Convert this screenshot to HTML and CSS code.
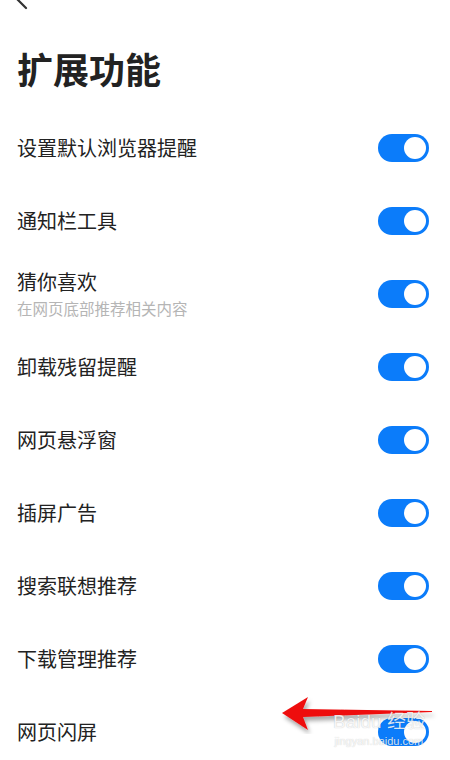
FILE: index.html
```html
<!DOCTYPE html>
<html lang="zh">
<head>
<meta charset="UTF-8">
<meta name="viewport" content="width=device-width, initial-scale=1.0">
<title>扩展功能</title>
<link rel="stylesheet" href="styles.css">
</head>
<body>
<div class="page">
  <div class="topbar">
    <svg class="back" width="24" height="24" viewBox="0 0 24 24">
      <path d="M22 8 H4 M11 1 L4 8 L13 17" fill="none" stroke="#333" stroke-width="2.2" stroke-linecap="round" stroke-linejoin="round"/>
    </svg>
  </div>
  <h1 class="title">扩展功能</h1>

  <div class="row">
    <div class="label">设置默认浏览器提醒</div>
    <span class="toggle"></span>
  </div>
  <div class="row">
    <div class="label">通知栏工具</div>
    <span class="toggle"></span>
  </div>
  <div class="row">
    <div class="label">猜你喜欢
      <div class="sub">在网页底部推荐相关内容</div>
    </div>
    <span class="toggle"></span>
  </div>
  <div class="row">
    <div class="label">卸载残留提醒</div>
    <span class="toggle"></span>
  </div>
  <div class="row">
    <div class="label">网页悬浮窗</div>
    <span class="toggle"></span>
  </div>
  <div class="row">
    <div class="label">插屏广告</div>
    <span class="toggle"></span>
  </div>
  <div class="row">
    <div class="label">搜索联想推荐</div>
    <span class="toggle"></span>
  </div>
  <div class="row">
    <div class="label">下载管理推荐</div>
    <span class="toggle"></span>
  </div>
  <div class="row">
    <div class="label">网页闪屏</div>
    <span class="toggle"></span>
  </div>
</div>

<!-- annotation arrow + watermark over the last row -->
<svg class="arrow" width="160" height="40" viewBox="0 0 160 40">
  <defs>
    <filter id="sh" x="-10%" y="-30%" width="130%" height="180%">
      <feDropShadow dx="2" dy="4" stdDeviation="2" flood-color="#000" flood-opacity="0.35"/>
    </filter>
  </defs>
  <path d="M2 19 L28 3 L23 15 L152 17 L152 18 L23 23 L28 36 Z" fill="#ee1111" filter="url(#sh)"/>
</svg>
<div class="mark">
  <span class="mark-logo">Bai<span class="paw">du</span> 经验</span>
  <span class="mark-url">jingyan.baidu.com</span>
</div>
</body>
</html>
```

FILE: styles.css
```css
body {
  margin: 0;
  background-color: #fff;
  font-family: "Noto Sans CJK SC", "Noto Sans", sans-serif;
  color: #222;
}
.page {
  width: 450px;
  height: 760px;
  overflow: hidden;
  padding: 0 21px 0 17px;
  box-sizing: border-box;
}
.topbar {
  height: 30px;
  display: flex;
  align-items: flex-start;
}
.back {
  display: block;
  margin-top: -9px;
  margin-left: -4px;
}
.title {
  margin: 0;
  height: 81px;
  padding-bottom: 6px;
  box-sizing: border-box;
  display: flex;
  align-items: center;
  font-size: 36px;
  font-weight: 700;
  color: #222;
}
.row {
  height: 73px;
  display: flex;
  align-items: center;
  justify-content: space-between;
}
.label {
  font-size: 20px;
  line-height: 26px;
}
.sub {
  font-size: 15.5px;
  line-height: 22px;
  color: #b5b5b5;
  margin-top: 2px;
}
.toggle {
  position: relative;
  width: 51px;
  height: 28px;
  border-radius: 14px;
  background-color: #0b7cfa;
  flex-shrink: 0;
}
.toggle::after {
  content: "";
  position: absolute;
  right: 3px;
  top: 3px;
  width: 22px;
  height: 22px;
  border-radius: 50%;
  background-color: #fff;
}
.arrow {
  position: absolute;
  left: 280px;
  top: 694px;
}
.mark {
  position: absolute;
  left: 333px;
  top: 712px;
  display: flex;
  flex-direction: column;
  align-items: center;
  font-family: "Liberation Sans", sans-serif;
  color: rgba(255, 255, 255, 0.85);
  text-shadow: 0 0 1px rgba(0, 0, 0, 0.25);
  pointer-events: none;
}
.mark-logo {
  font-size: 19px;
  line-height: 20px;
  font-family: "Liberation Sans", "Noto Sans CJK SC", sans-serif;
}
.mark-url {
  font-size: 11px;
  line-height: 13px;
  margin-top: 3px;
}
```
